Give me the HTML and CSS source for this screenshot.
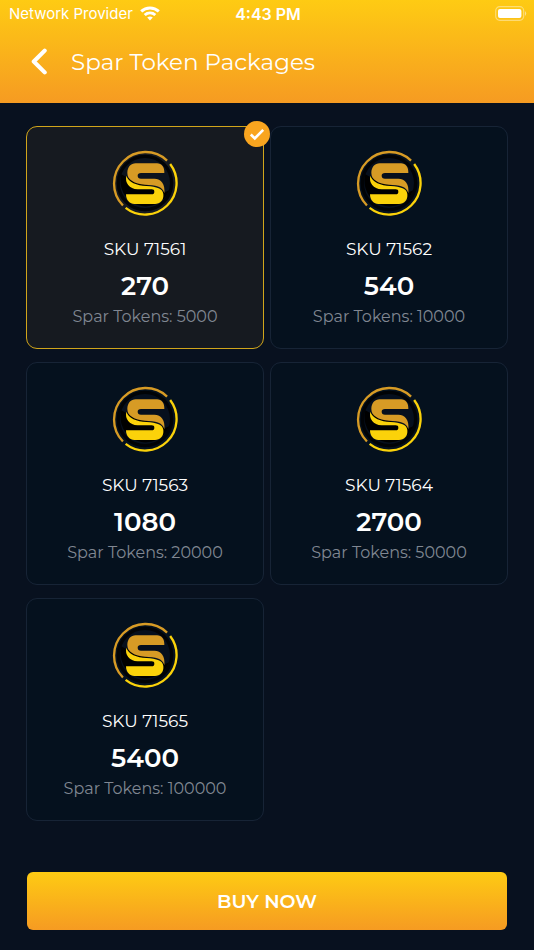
FILE: index.html
```html
<!DOCTYPE html>
<html lang="en">
<head>
<meta charset="utf-8">
<meta name="viewport" content="width=device-width, initial-scale=1">
<title>Spar Token Packages</title>
<link rel="stylesheet" href="styles.css">
</head>
<body>
<svg class="defs" aria-hidden="true">
  <symbol id="coin" viewBox="21 21 198 198">
    <circle cx="120" cy="120" r="80" fill="#07101d" fill-opacity=".65" stroke="#010306" stroke-width="10"/>
    <path d="M49 94 L68 104 L178 148 L193 142 A76 76 0 0 1 49 94Z" fill="#000"/>
    <path d="M53.8 187.4 A94.5 94.5 0 0 1 186.2 52.6" fill="none" stroke="#d79b25" stroke-width="7"/>
    <path d="M195.5 63.1 A94.5 94.5 0 0 1 61.8 194.5" fill="none" stroke="#fbd20a" stroke-width="7"/>
    <path d="M92 61 H156 C170 61 179 73 178 90 H108 Q98 90 98 98 Q98 107 108 107 H148 C169 107 181 124 178 151 C173 128 151 127 120 125 C88 122 67 111 67 90 C67 72 78 61 92 61Z" fill="#d79b25"/>
    <path d="M64 98 C70 118 95 127 125 129 C155 131 174 137 175 153 C177 172 165 183 150 183 H88 C75 183 63 172 63 154 H140 Q148 154 148 146 Q148 139 140 139 H98 C73 137 59 120 64 98Z" fill="#fbd20a"/>
  </symbol>
</svg>

<header class="header">
  <div class="status">
    <div class="carrier">
      <span>Network Provider</span>
      <svg class="wifi" viewBox="0 0 20 15" fill="none" stroke="#fff" stroke-width="3" aria-hidden="true">
        <path d="M1.2 5.4 C6.2 .7 13.8 .7 18.8 5.4"/>
        <path d="M4.7 9 C7.8 6.2 12.2 6.2 15.3 9"/>
        <path d="M10 14.5 L7.2 11.6 Q10 9.4 12.8 11.6Z" fill="#fff" stroke="none"/>
      </svg>
    </div>
    <time class="clock">4:43 PM</time>
    <svg class="battery" viewBox="0 0 32 15" aria-hidden="true">
      <rect x=".7" y=".7" width="28" height="13.6" rx="4" fill="none" stroke="#fff" stroke-opacity=".4" stroke-width="1.2"/>
      <rect x="3" y="3" width="23.4" height="9" rx="2" fill="#fff"/>
      <path d="M30 5 Q32.4 7.5 30 10Z" fill="#fff" fill-opacity=".5"/>
    </svg>
  </div>
  <div class="nav">
    <button class="back" type="button" aria-label="Back">
      <svg viewBox="0 0 16 26" fill="none" stroke="#fff" stroke-width="4" stroke-linecap="round" stroke-linejoin="round" aria-hidden="true"><path d="M13 2.5 L2.5 13 L13 23.5"/></svg>
    </button>
    <h1 class="title">Spar Token Packages</h1>
  </div>
</header>

<main class="main">
  <div class="packages">
    <button class="card selected" type="button" aria-pressed="true">
      <svg class="coin" aria-hidden="true"><use href="#coin"/></svg>
      <span class="sku">SKU 71561</span>
      <span class="price">270</span>
      <span class="tokens">Spar Tokens: 5000</span>
      <svg class="check" viewBox="0 0 26 26" aria-hidden="true"><circle cx="13" cy="13" r="13" fill="#f9a51f"/><path d="M6.8 13.5 L10.8 17.4 L19.2 8.8" fill="none" stroke="#fff" stroke-width="2.6"/></svg>
    </button>
    <button class="card" type="button" aria-pressed="false">
      <svg class="coin" aria-hidden="true"><use href="#coin"/></svg>
      <span class="sku">SKU 71562</span>
      <span class="price">540</span>
      <span class="tokens">Spar Tokens: 10000</span>
    </button>
    <button class="card" type="button" aria-pressed="false">
      <svg class="coin" aria-hidden="true"><use href="#coin"/></svg>
      <span class="sku">SKU 71563</span>
      <span class="price">1080</span>
      <span class="tokens">Spar Tokens: 20000</span>
    </button>
    <button class="card" type="button" aria-pressed="false">
      <svg class="coin" aria-hidden="true"><use href="#coin"/></svg>
      <span class="sku">SKU 71564</span>
      <span class="price">2700</span>
      <span class="tokens">Spar Tokens: 50000</span>
    </button>
    <button class="card" type="button" aria-pressed="false">
      <svg class="coin" aria-hidden="true"><use href="#coin"/></svg>
      <span class="sku">SKU 71565</span>
      <span class="price">5400</span>
      <span class="tokens">Spar Tokens: 100000</span>
    </button>
  </div>
  <button class="buy" type="button">BUY NOW</button>
</main>
</body>
</html>
```
FILE: styles.css
```css
* {
  box-sizing: border-box;
}

body {
  display: flex;
  flex-direction: column;
  min-height: 100vh;
  margin: 0;
  background: #08111f;
  color: #fff;
  font-family: Montserrat, Inter, sans-serif;
}

button {
  border: 0;
  padding: 0;
  background: none;
  color: inherit;
  font: inherit;
  cursor: pointer;
}

svg {
  display: block;
}

.defs {
  position: absolute;
  width: 0;
  height: 0;
}

.header {
  padding-bottom: 21px;
  background: linear-gradient(#fecb13, #f69b22);
}

.status {
  display: grid;
  grid-template-columns: 1fr auto 1fr;
  align-items: center;
  height: 27px;
  padding: 0 7px 0 9px;
  font-family: Inter, sans-serif;
  font-size: 15px;
}

.carrier {
  display: flex;
  align-items: center;
  gap: 7px;
}

.wifi {
  width: 20px;
  height: 15px;
}

.clock {
  font-size: 16px;
  font-weight: 600;
}

.battery {
  width: 32px;
  height: 15px;
  justify-self: end;
}

.nav {
  display: flex;
  align-items: center;
  gap: 23px;
  height: 55px;
  padding: 14px 26px 0 31px;
}

.back {
  width: 17px;
}

.back svg {
  width: 17px;
  height: 27px;
}

.title {
  margin: 0;
  font-size: 23px;
  font-weight: 400;
  line-height: 32px;
}

.main {
  display: flex;
  flex: 1;
  flex-direction: column;
  justify-content: space-between;
  gap: 24px;
  padding: 23px 26px 20px;
}

.packages {
  display: grid;
  grid-template-columns: 1fr 1fr;
  gap: 13px 6px;
}

.card {
  position: relative;
  display: flex;
  flex-direction: column;
  align-items: center;
  padding: 23px 12px 19px;
  border: 1px solid #172436;
  border-radius: 11px;
  background: #05111e;
}

.selected {
  border-color: #d0a51b;
  background: #161a20;
}

.coin {
  width: 66px;
  height: 66px;
}

.check {
  position: absolute;
  top: -6px;
  right: -7px;
  width: 26px;
  height: 26px;
}

.sku {
  margin-top: 21px;
  font-size: 17px;
  line-height: 24px;
}

.price {
  margin-top: 7px;
  font-size: 26px;
  font-weight: 600;
  line-height: 36px;
}

.tokens {
  color: #808792;
  font-size: 16px;
  line-height: 25px;
}

.buy {
  height: 58px;
  margin: 0 1px;
  border-radius: 6px;
  background: linear-gradient(#fecb13, #f69b22);
  font-size: 19px;
  font-weight: 600;
}
```
